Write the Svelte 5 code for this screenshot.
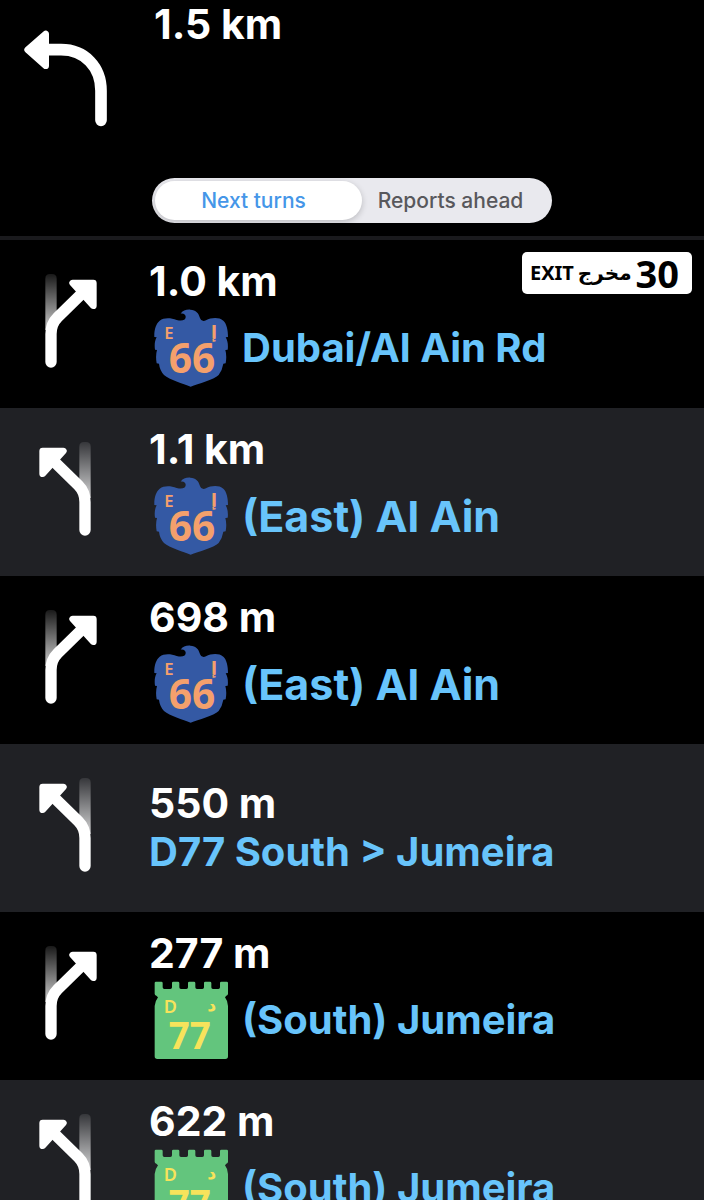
<script>
  let tab = $state('turns');

  const turns = [
    { direction: 'right', distance: '1.0 km', road: 'Dubai/Al Ain Rd', shield: 'E66', exit: '30' },
    { direction: 'left', distance: '1.1 km', road: '(East) Al Ain', shield: 'E66', large: true },
    { direction: 'right', distance: '698 m', road: '(East) Al Ain', shield: 'E66', large: true },
    { direction: 'left', distance: '550 m', road: 'D77 South > Jumeira' },
    { direction: 'right', distance: '277 m', road: '(South) Jumeira', shield: 'D77' },
    { direction: 'left', distance: '622 m', road: '(South) Jumeira', shield: 'D77' }
  ];
</script>

{#snippet turnIcon(direction, id)}
  <svg class="turn-icon" viewBox="24 27 180 300" aria-hidden="true">
    <defs>
      <linearGradient id="fade-{id}" x1="0" y1="0" x2="0" y2="1">
        <stop offset="0" stop-color="#fff" stop-opacity="0.1" />
        <stop offset="1" stop-color="#fff" stop-opacity="0.8" />
      </linearGradient>
    </defs>
    <g transform={direction === 'left' ? 'translate(228 0) scale(-1 1)' : null}>
      <path d="M46 41 Q46 27 60 27 H66 Q80 27 80 41 V195 H46 Z" fill="url(#fade-{id})" />
      <path d="M63 291 V207 C63 184 70 170 83 157 L155 86" fill="none" stroke="#fff" stroke-width="34" stroke-linecap="round" />
      <path d="M128 54 H190 V122 Z" fill="#fff" stroke="#fff" stroke-width="20" stroke-linejoin="round" />
    </g>
  </svg>
{/snippet}

{#snippet falconShield()}
  <svg class="shield falcon" viewBox="12 24 222 234" role="img" aria-label="E 66">
    <path
      fill="#3459a4"
      d="M92 38 C97 29 110 25 121 26 C138 27 146 37 149 49 C152 59 159 62 168 58
        C183 50 207 48 220 59 C230 68 234 87 234 108 L227 109 C233 119 235 133 233 146
        L226 147 Q231 164 227 187 L220 188 Q217 207 206 222 C191 236 145 249 122 257
        C99 249 59 236 42 222 Q29 207 27 188 L20 187 Q16 164 21 147 L15 146
        C13 133 14 119 20 109 L13 108 C12 87 18 68 29 59 C42 49 62 50 80 57
        C96 61 106 58 107 49 C108 41 101 36 92 38 Z"
    />
    <text x="43" y="115" class="letter">E</text>
    <text x="183" y="112" class="arabic">إ</text>
    <text x="126" y="215" class="number">66</text>
  </svg>
{/snippet}

{#snippet fortShield()}
  <svg class="shield fort" viewBox="25 150 222 234" role="img" aria-label="D 77">
    <path
      fill="#63c57d"
      d="M31 152 H47 Q51 152 51 156 V169 Q51 174 56 174 H74 Q79 174 79 169 V156 Q79 152 83 152
        H97 Q101 152 101 156 V169 Q101 174 106 174 H122 Q127 174 127 169 V156 Q127 152 131 152
        H145 Q149 152 149 156 V169 Q149 174 154 174 H170 Q175 174 175 169 V156 Q175 152 179 152
        H193 Q197 152 197 156 V169 Q197 174 202 174 H218 Q223 174 223 169 V156 Q223 152 227 152
        H243 Q247 152 247 156 V188 Q247 193 242 194 L238 199 Q246 209 247 225
        V376 Q247 384 239 384 H35 Q27 384 27 376 V225 Q29 209 37 199 L32 194
        Q27 193 27 188 V156 Q27 152 31 152 Z"
    />
    <text x="54" y="247" class="letter">D</text>
    <text x="185" y="240" class="arabic">د</text>
    <text x="132" y="353" class="number">77</text>
  </svg>
{/snippet}

<main class="navigation">
  <header>
    <div class="current">
      <svg class="current-icon" viewBox="72 90 252 291" aria-hidden="true">
        <path d="M303 361 V272 C303 202 255 149 183 149 H135" fill="none" stroke="#fff" stroke-width="35" stroke-linecap="round" />
        <path d="M83 149 L137 102 V197 Z" fill="#fff" stroke="#fff" stroke-width="20" stroke-linejoin="round" />
      </svg>
      <h1 class="distance">1.5 km</h1>
    </div>
    <div class="segments">
      <button class:active={tab === 'turns'} aria-pressed={tab === 'turns'} onclick={() => (tab = 'turns')}>
        Next turns
      </button>
      <button class:active={tab === 'reports'} aria-pressed={tab === 'reports'} onclick={() => (tab = 'reports')}>
        Reports ahead
      </button>
    </div>
  </header>

  <ol>
    {#each turns as turn, i}
      <li>
        {@render turnIcon(turn.direction, i)}
        <div class="details">
          <div class="distance">{turn.distance}</div>
          <div class="road" class:signed={turn.shield} class:large={turn.large}>
            {#if turn.shield === 'E66'}
              {@render falconShield()}
            {:else if turn.shield === 'D77'}
              {@render fortShield()}
            {/if}
            <span>{turn.road}</span>
          </div>
        </div>
        {#if turn.exit}
          <div class="exit">
            <span>EXIT</span>
            <span class="exit-arabic" lang="ar">مخرج</span>
            <span class="exit-number">{turn.exit}</span>
          </div>
        {/if}
      </li>
    {/each}
  </ol>
</main>

<style>
  :global(body) {
    background: #000;
  }

  .navigation {
    height: 100vh;
    overflow: hidden;
    color: #fff;
    background: #000;
    font-family: Inter, 'Liberation Sans', sans-serif;
  }

  header {
    display: flex;
    flex-direction: column;
    gap: 51px;
    padding-bottom: 13px;
    border-bottom: 4px solid #1a1a1d;
  }

  .current {
    display: flex;
    align-items: flex-start;
    gap: 46px;
    padding-left: 24px;
  }

  .current-icon {
    width: 84px;
    height: 97px;
    margin-top: 30px;
  }

  .distance {
    margin: 0;
    font-size: 41px;
    font-weight: 700;
    line-height: 48px;
  }

  .segments {
    display: grid;
    grid-template-columns: 207px 1fr;
    box-sizing: border-box;
    width: 400px;
    height: 45px;
    margin: 0 auto;
    padding: 3px;
    border-radius: 23px;
    background: #e9e9ee;
  }

  .segments button {
    padding: 1px 10px 0 0;
    border: 0;
    border-radius: 20px;
    color: #58585c;
    background: none;
    font: 500 21px/38px Inter, 'Liberation Sans', sans-serif;
    cursor: pointer;
  }

  .segments button.active {
    color: #4596e8;
    background: #fff;
    box-shadow: 0 2px 6px rgba(0, 0, 0, 0.2);
  }

  ol {
    margin: 0;
    padding: 0;
    list-style: none;
  }

  li {
    position: relative;
    display: flex;
    align-items: center;
    gap: 51px;
    height: 168px;
    padding-left: 38px;
  }

  li:nth-child(even) {
    background: #202125;
  }

  .turn-icon {
    flex: none;
    width: 60px;
    height: 100px;
  }

  .road {
    display: flex;
    align-items: center;
    gap: 14px;
    color: #68c4fb;
    font-size: 40px;
    font-weight: 700;
    line-height: 50px;
    white-space: nowrap;
  }

  .road.signed {
    height: 86px;
    padding-left: 5px;
  }

  .road.large {
    font-size: 43px;
  }

  .shield {
    flex: none;
    width: 74px;
    height: 78px;
    font-family: 'Noto Sans', 'Open Sans', sans-serif;
    font-weight: 700;
  }

  .falcon {
    fill: #f4a06c;
  }

  .fort {
    fill: #f7e35b;
  }

  .letter {
    font-size: 50px;
    font-weight: 600;
  }

  .fort .letter {
    font-size: 54px;
  }

  .arabic {
    font-family: 'DejaVu Sans', sans-serif;
    font-size: 52px;
  }

  .number {
    font-size: 122px;
    text-anchor: middle;
  }

  .fort .number {
    font-size: 110px;
  }

  .exit {
    position: absolute;
    top: 12px;
    right: 12px;
    display: flex;
    align-items: center;
    gap: 4px;
    box-sizing: border-box;
    height: 42px;
    padding: 0 13px 0 8px;
    border-radius: 5px;
    color: #000;
    background: #fff;
    font: 700 20px/42px 'Noto Sans', 'Open Sans', sans-serif;
  }

  .exit-arabic {
    font-family: 'DejaVu Sans', sans-serif;
  }

  .exit-number {
    font-size: 38px;
  }
</style>
